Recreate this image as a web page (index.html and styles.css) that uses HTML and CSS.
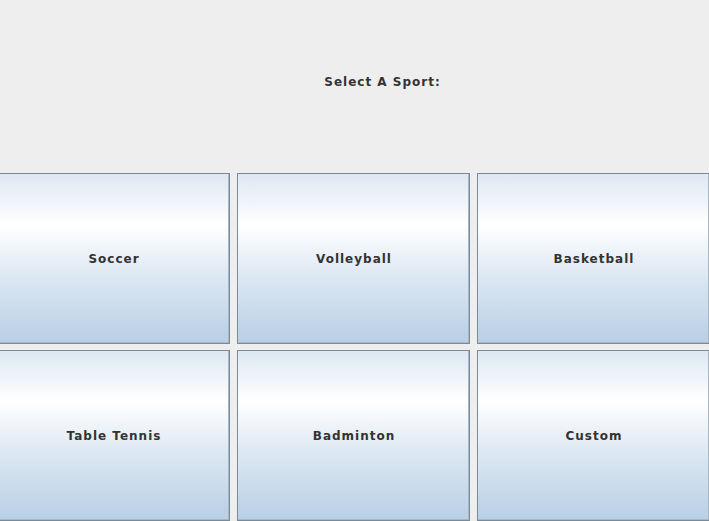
FILE: index.html
```
<!DOCTYPE html>
<html>
<head>
<meta charset="utf-8">
<link rel="stylesheet" href="styles.css">
</head>
<body>
<div class="frame">
  <header class="header"><span class="title">Select A Sport:</span></header>
  <div class="grid">
    <button class="btn">Soccer</button>
    <button class="btn">Volleyball</button>
    <button class="btn">Basketball</button>
    <button class="btn">Table Tennis</button>
    <button class="btn">Badminton</button>
    <button class="btn">Custom</button>
  </div>
</div>
</body>
</html>
```
FILE: styles.css
```
html, body {
  margin: 0;
  padding: 0;
  background: #eeeeee;
  overflow: hidden;
}
.frame {
  width: 709px;
  height: 521px;
  overflow: hidden;
  font-family: "DejaVu Sans", sans-serif;
}
.header {
  height: 173px;
  display: flex;
  align-items: center;
  justify-content: center;
  padding-left: 56px;
  padding-bottom: 10px;
  box-sizing: border-box;
}
.title {
  font-weight: bold;
  font-size: 12px;
  letter-spacing: 1px;
  color: #333333;
}
.grid {
  margin-left: -3px;
  display: grid;
  grid-template-columns: repeat(3, 233px);
  grid-template-rows: repeat(2, 171px);
  column-gap: 7px;
  row-gap: 6px;
}
.btn {
  margin: 0;
  padding: 1px 0 0 1px;
  border: 1px solid #7a8a99;
  box-shadow: inset -1px -1px 0 #a9b6c3;
  background: linear-gradient(to bottom, #dde8f3 0%, #ffffff 30%, #dde8f3 60%, #b8cfe5 100%);
  font-family: "DejaVu Sans", sans-serif;
  font-weight: bold;
  font-size: 12px;
  letter-spacing: 1px;
  color: #333333;
}
```
